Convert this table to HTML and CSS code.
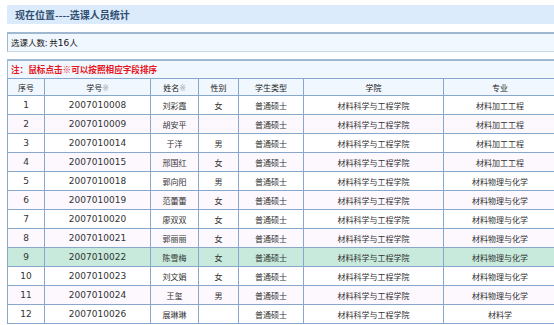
FILE: index.html
```html
<!DOCTYPE html>
<html lang="zh-CN">
<head>
<meta charset="utf-8">
<title>选课人员统计</title>
<link rel="stylesheet" href="styles.css">
</head>
<body>
<div class="page">
  <div class="titlebar">现在位置----选课人员统计</div>
  <div class="box count">选课人数: 共<span class="digits">16</span>人</div>
  <div class="box note">注：鼠标点击※可以按照相应字段排序</div>
  <table class="grid">
    <colgroup>
      <col class="c1"><col class="c2"><col class="c3"><col class="c4"><col class="c5"><col class="c6"><col class="c7">
    </colgroup>
    <thead>
      <tr><th>序号</th><th>学号<span class="mark">※</span></th><th>姓名<span class="mark">※</span></th><th>性别</th><th>学生类型</th><th>学院</th><th>专业</th></tr>
    </thead>
    <tbody>
      <tr><td class="num">1</td><td class="num">2007010008</td><td>刘彩霞</td><td>女</td><td>普通硕士</td><td>材料科学与工程学院</td><td>材料加工工程</td></tr>
      <tr class="alt"><td class="num">2</td><td class="num">2007010009</td><td>胡安平</td><td></td><td>普通硕士</td><td>材料科学与工程学院</td><td>材料加工工程</td></tr>
      <tr><td class="num">3</td><td class="num">2007010014</td><td>于洋</td><td>男</td><td>普通硕士</td><td>材料科学与工程学院</td><td>材料加工工程</td></tr>
      <tr class="alt"><td class="num">4</td><td class="num">2007010015</td><td>邢国红</td><td>女</td><td>普通硕士</td><td>材料科学与工程学院</td><td>材料加工工程</td></tr>
      <tr><td class="num">5</td><td class="num">2007010018</td><td>郭向阳</td><td>男</td><td>普通硕士</td><td>材料科学与工程学院</td><td>材料物理与化学</td></tr>
      <tr class="alt"><td class="num">6</td><td class="num">2007010019</td><td>范蕾蕾</td><td>女</td><td>普通硕士</td><td>材料科学与工程学院</td><td>材料物理与化学</td></tr>
      <tr><td class="num">7</td><td class="num">2007010020</td><td>廖双双</td><td>女</td><td>普通硕士</td><td>材料科学与工程学院</td><td>材料物理与化学</td></tr>
      <tr class="alt"><td class="num">8</td><td class="num">2007010021</td><td>郭丽丽</td><td>女</td><td>普通硕士</td><td>材料科学与工程学院</td><td>材料物理与化学</td></tr>
      <tr class="hl"><td class="num">9</td><td class="num">2007010022</td><td>陈雪梅</td><td>女</td><td>普通硕士</td><td>材料科学与工程学院</td><td>材料物理与化学</td></tr>
      <tr><td class="num">10</td><td class="num">2007010023</td><td>刘文娟</td><td>女</td><td>普通硕士</td><td>材料科学与工程学院</td><td>材料物理与化学</td></tr>
      <tr class="alt"><td class="num">11</td><td class="num">2007010024</td><td>王玺</td><td>男</td><td>普通硕士</td><td>材料科学与工程学院</td><td>材料物理与化学</td></tr>
      <tr><td class="num">12</td><td class="num">2007010026</td><td>展琳琳</td><td></td><td>普通硕士</td><td>材料科学与工程学院</td><td>材料学</td></tr>
    </tbody>
  </table>
</div>
</body>
</html>
```

FILE: styles.css
```css
html, body {
  margin: 0;
  padding: 0;
  background: #ffffff;
  overflow: hidden;
}
body {
  font-family: "DejaVu Sans", "Noto Sans CJK SC", sans-serif;
  color: #222;
}
.page {
  width: 560px;
  padding: 5px 0 0 7px;
  box-sizing: border-box;
}
.titlebar {
  height: 19px;
  line-height: 19px;
  background: #dcebfc;
  padding-left: 8px;
  font-family: "Noto Sans CJK SC", sans-serif;
  font-size: 10px;
  font-weight: bold;
  color: #2e4d70;
}
.box {
  margin-top: 8px;
  height: 17px;
  line-height: 17px;
  background: #f1f7fe;
  border-top: 2px solid #9fb8d0;
  border-bottom: 1px solid #c9d9e8;
  border-left: 1px solid #9fb8d0;
  padding-left: 3px;
  font-family: "Noto Sans CJK SC", sans-serif;
}
.count {
  font-size: 8.5px;
  color: #111;
}
.count .digits {
  font-family: "DejaVu Sans", sans-serif;
  font-size: 9px;
}
.note {
  margin-top: 7px;
  font-size: 8.6px;
  font-weight: bold;
  color: #e8141c;
  border-bottom: none;
}
.grid {
  border-collapse: collapse;
  table-layout: fixed;
  width: 549px;
  font-family: "DejaVu Sans", "Noto Sans CJK SC", sans-serif;
  font-size: 8px;
  color: #333;
}
.c1 { width: 37px; }
.c2 { width: 106px; }
.c3 { width: 48px; }
.c4 { width: 40px; }
.c5 { width: 65px; }
.c6 { width: 140px; }
.c7 { width: 113px; }
.grid th,
.grid td {
  border: 1px solid #87a7cd;
  text-align: center;
  padding: 0;
  white-space: nowrap;
  overflow: hidden;
}
.grid th {
  height: 16px;
  background: #f1f7fe;
  font-weight: normal;
  color: #222;
}
.grid td {
  height: 18px;
}
.grid .num {
  font-size: 9px;
}
.mark {
  color: #aaa;
}
.grid tr.alt td {
  background: #fcf8fe;
}
.grid tr.hl td {
  background: #c7eadc;
}
```
